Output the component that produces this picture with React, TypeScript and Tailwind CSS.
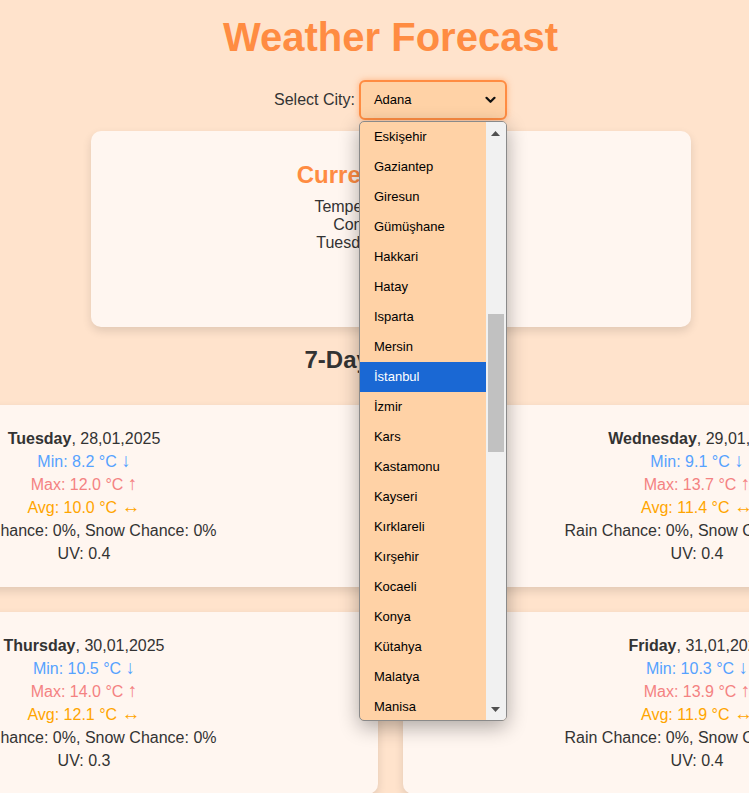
import React from "react";

const cities = [
  "Eskişehir",
  "Gaziantep",
  "Giresun",
  "Gümüşhane",
  "Hakkari",
  "Hatay",
  "Isparta",
  "Mersin",
  "İstanbul",
  "İzmir",
  "Kars",
  "Kastamonu",
  "Kayseri",
  "Kırklareli",
  "Kırşehir",
  "Kocaeli",
  "Konya",
  "Kütahya",
  "Malatya",
  "Manisa",
];

const days = [
  { day: "Tuesday", date: "28,01,2025", min: "8.2", max: "12.0", avg: "10.0", uv: "0.4" },
  { day: "Wednesday", date: "29,01,2025", min: "9.1", max: "13.7", avg: "11.4", uv: "0.4" },
  { day: "Thursday", date: "30,01,2025", min: "10.5", max: "14.0", avg: "12.1", uv: "0.3" },
  { day: "Friday", date: "31,01,2025", min: "10.3", max: "13.9", avg: "11.9", uv: "0.4" },
  { day: "Saturday", date: "01,02,2025", min: "9.8", max: "13.2", avg: "11.3", uv: "0.5" },
  { day: "Sunday", date: "02,02,2025", min: "8.9", max: "12.6", avg: "10.6", uv: "0.4" },
  { day: "Monday", date: "03,02,2025", min: "8.4", max: "12.1", avg: "10.2", uv: "0.3" },
];

function Arrow({ ch }: { ch: string }) {
  return <span className="text-[19px] leading-[0px]">{ch}</span>;
}

function DayCard({ d }: { d: (typeof days)[number] }) {
  return (
    <div className="rounded-[10px] bg-[#fff6f0] py-[22px] text-center text-[16px] leading-[23px] shadow-[0_4px_10px_rgba(0,0,0,0.12)]">
      <div>
        <span className="font-bold">{d.day}</span>, {d.date}
      </div>
      <div className="text-[#56a2ff]">
        Min: {d.min} °C <Arrow ch="↓" />
      </div>
      <div className="text-[#f48282]">
        Max: {d.max} °C <Arrow ch="↑" />
      </div>
      <div className="text-[#ffa500]">
        Avg: {d.avg} °C <Arrow ch="↔" />
      </div>
      <div>Rain Chance: 0%, Snow Chance: 0%</div>
      <div>UV: {d.uv}</div>
    </div>
  );
}

export default function App() {
  return (
    <div className="min-h-screen w-full overflow-hidden bg-[#ffe3cc] font-['Liberation_Sans',Arial,sans-serif] text-[#333]">
      <div className="flex w-[781px] flex-col items-center pt-[14px] pb-10">
        <h1 className="text-[40px] font-bold leading-[46px] text-[#ff8c42]">Weather Forecast</h1>

        <div className="mt-[20px] flex items-center gap-[4px]">
          <span className="text-[16px] leading-[18px]">Select City:</span>
          <div className="relative z-20">
            <div className="flex h-[40px] w-[148px] items-center justify-between rounded-[6px] border-2 border-[#ff8c42] bg-[#ffd2a6] pl-[13px] pr-[9px] text-[13px] text-black shadow-[0_0_6px_rgba(255,140,66,0.55)]">
              <span>Adana</span>
              <svg width="11" height="8" viewBox="0 0 11 8" fill="none">
                <path d="M1.5 1.8 L5.5 5.8 L9.5 1.8" stroke="#111" strokeWidth="2.2" strokeLinecap="round" strokeLinejoin="round" />
              </svg>
            </div>

            <div className="absolute left-0 top-[41px] flex h-[600px] w-[148px] overflow-hidden rounded-[5px] border border-[#8a8a8a] bg-[#ffd2a6] shadow-[0_6px_20px_rgba(0,0,0,0.32)]">
              <div className="flex w-[126px] flex-col">
                {cities.map((c) => (
                  <div
                    key={c}
                    className={
                      c === "İstanbul"
                        ? "flex h-[30px] shrink-0 items-center bg-[#1a68d4] pl-[14px] text-[13px] text-white"
                        : "flex h-[30px] shrink-0 items-center pl-[14px] text-[13px] text-black"
                    }
                  >
                    {c}
                  </div>
                ))}
              </div>
              <div className="flex w-[20px] flex-col bg-[#f1f1f1]">
                <div className="flex h-[20px] items-center justify-center pt-[2px]">
                  <svg width="9" height="5" viewBox="0 0 9 5">
                    <path d="M0 5 L4.5 0 L9 5 Z" fill="#505050" />
                  </svg>
                </div>
                <div className="flex-1">
                  <div className="mt-[172px] ml-[2px] h-[138px] w-[16px] bg-[#c1c1c1]" />
                </div>
                <div className="flex h-[20px] items-center justify-center pb-[2px]">
                  <svg width="9" height="5" viewBox="0 0 9 5">
                    <path d="M0 0 L9 0 L4.5 5 Z" fill="#505050" />
                  </svg>
                </div>
              </div>
            </div>
          </div>
        </div>

        <div className="mt-[11px] h-[196px] w-[600px] rounded-[10px] bg-[#fff6f0] pt-[30px] text-center shadow-[0_4px_10px_rgba(0,0,0,0.12)]">
          <h2 className="text-[24px] font-bold leading-[28px] text-[#ff8c42]">Current Weather</h2>
          <div className="mt-[9px] text-[16px] leading-[18px]">
            <div>Temperature: 10.4 °C</div>
            <div>Condition: Clear</div>
            <div>Tuesday, 28,01,2025</div>
          </div>
        </div>

        <h2 className="mt-[19px] text-[24px] font-bold leading-[28px] text-[#333]">7-Day Forecast</h2>

        <div className="mt-[31px] grid w-full grid-cols-[588px_588px] justify-center gap-[25px]">
          {days.map((d) => (
            <DayCard key={d.day} d={d} />
          ))}
        </div>
      </div>
    </div>
  );
}
